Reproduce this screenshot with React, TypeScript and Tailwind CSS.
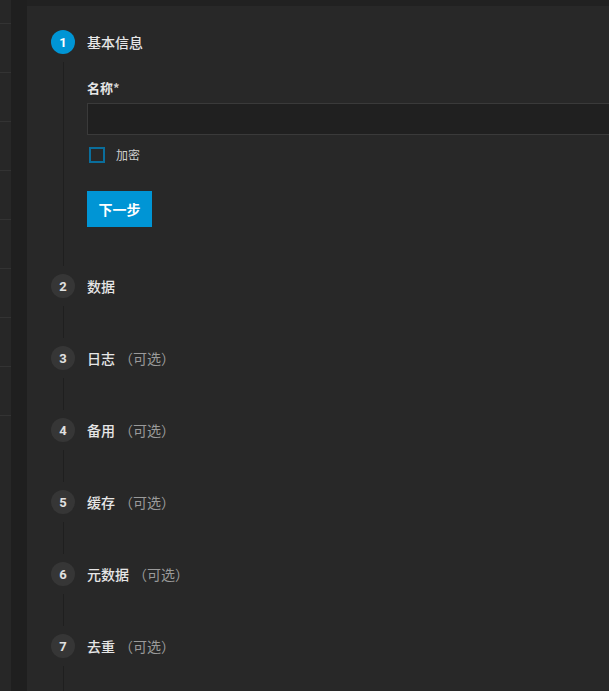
import { FunctionComponent, ReactNode } from 'react'

interface StepProps {
  index: number
  title: string
  optional?: boolean
  active?: boolean
  children?: ReactNode
}

const Step: FunctionComponent<StepProps> = ({
  index,
  title,
  optional,
  active,
  children,
}) => {
  return (
    <div className="flex flex-col">
      <div className="flex h-6 items-center">
        <div
          className={
            active
              ? 'flex h-6 w-6 items-center justify-center rounded-full bg-[#0095d5] text-[13px] font-bold leading-none text-white'
              : 'flex h-6 w-6 items-center justify-center rounded-full bg-[#363636] text-[13px] font-bold leading-none text-[#e0e0e0]'
          }
          style={{ fontFamily: 'Roboto, "Noto Sans", sans-serif' }}
        >
          {index}
        </div>
        <div className="ml-3 flex items-center text-[14px] font-medium text-[#e6e6e6]">
          <span>{title}</span>
          {optional && (
            <span className="ml-1 font-normal text-[#9a9a9a]">（可选）</span>
          )}
        </div>
      </div>
      <div className="my-2 ml-3 min-h-8 border-l border-[#1f1f1f] pl-[23px]">
        {children}
      </div>
    </div>
  )
}

const steps = [
  { title: '数据' },
  { title: '日志', optional: true },
  { title: '备用', optional: true },
  { title: '缓存', optional: true },
  { title: '元数据', optional: true },
  { title: '去重', optional: true },
]

export default function App() {
  return (
    <div
      className="flex h-[691px] w-[609px] overflow-hidden bg-[#1f1f1f]"
      style={{ fontFamily: '"Noto Sans CJK SC", "Noto Sans", sans-serif' }}
    >
      <div className="flex w-[11px] shrink-0 flex-col bg-[#272727]">
        {Array.from({ length: 9 }).map((_, i) => (
          <div
            key={i}
            className={i === 0 ? 'h-[24px] border-b border-[#333333]' : 'h-[49px] border-b border-[#333333]'}
          />
        ))}
      </div>
      <div className="w-4 shrink-0 bg-[#1f1f1f]" />
      <div className="flex flex-1 flex-col bg-[#212121] pt-[6px]">
        <div className="flex-1 bg-[#282828] pl-6 pt-6">
          <Step index={1} title="基本信息" active>
            <div className="flex flex-col pb-[39px] pt-[18px]">
              <div className="mb-[7px] h-4 text-[13px] font-bold leading-4 text-[#e6e6e6]">
                名称<span className="text-[#cccccc]">*</span>
              </div>
              <div className="h-[32px] w-[600px] border border-[#3a3a3a] bg-[#202020]" />
              <div className="mt-[12px] flex h-4 items-center">
                <div className="ml-[2px] h-4 w-4 border-2 border-[#0a6e9c]" />
                <span className="ml-[11px] text-[12px] leading-4 text-[#cfcfcf]">加密</span>
              </div>
              <button className="mt-[28px] h-9 w-[65px] bg-[#0095d5] text-[14px] font-bold text-white">
                下一步
              </button>
            </div>
          </Step>
          {steps.map((s, i) => (
            <Step
              key={s.title}
              index={i + 2}
              title={s.title}
              optional={s.optional}
            />
          ))}
        </div>
      </div>
    </div>
  )
}
